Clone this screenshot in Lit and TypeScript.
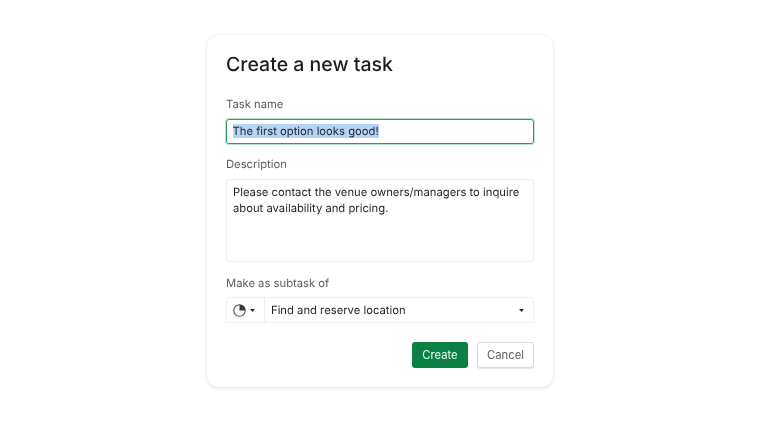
import { LitElement, html, css } from "lit";
import { customElement } from "lit/decorators.js";

@customElement("app-root")
export class AppRoot extends LitElement {
  static styles = css`
    :host {
      display: flex;
      justify-content: center;
      width: 760px;
      height: 424px;
      background: #fff;
      font-family: Inter, "Liberation Sans", sans-serif;
      color: #1f2328;
      box-sizing: border-box;
      padding-top: 35px;
      text-rendering: geometricPrecision;
    }
    .card {
      width: 346px;
      height: 352px;
      box-sizing: border-box;
      border-radius: 12px;
      background: #fff;
      box-shadow: 0 0 0 1px rgba(0, 0, 0, 0.02), 0 1px 4px rgba(0, 0, 0, 0.11);
      padding: 17px 19px 19px;
      display: flex;
      flex-direction: column;
      will-change: transform;
    }
    .card > * {
      flex: none;
    }
    h1 {
      margin: 0;
      font-size: 19.5px;
      line-height: 24px;
      font-weight: 500;
      color: #1a1e23;
    }
    label {
      display: block;
      font-size: 11.25px;
      line-height: 16px;
      color: #5a5f66;
    }
    .l1 { margin-top: 19.5px; }
    .l2 { margin-top: 12.5px; }
    .l3 { margin-top: 13.5px; }
    .input {
      margin-top: 7px;
      height: 25px;
      box-sizing: border-box;
      border: 1.5px solid #2f9a63;
      box-shadow: 0 0 0 1px #b9e2cb;
      border-radius: 3px;
      font-size: 11.25px;
      line-height: 15px;
      padding: 4px 5.5px;
      color: #1f2328;
      white-space: nowrap;
    }
    .sel {
      background: #b5d5f8;
    }
    .area {
      margin-top: 7px;
      height: 82.5px;
      box-sizing: border-box;
      border: 1px solid #eceef0;
      border-radius: 3px;
      padding: 3.5px 6px;
      font-size: 11.25px;
      line-height: 16.5px;
      color: #1f2328;
    }
    .select {
      margin-top: 6px;
      height: 26px;
      box-sizing: border-box;
      border: 1px solid #eff0f2;
      border-radius: 3px;
      display: flex;
      align-items: center;
      font-size: 11.25px;
      color: #1f2328;
    }
    .pre {
      width: 38px;
      height: 100%;
      box-sizing: border-box;
      border-right: 1px solid #eff0f2;
      display: flex;
      align-items: center;
      gap: 4px;
      padding-left: 6px;
    }
    .pie {
      width: 13px;
      height: 13px;
      display: block;
    }
    .caret {
      width: 5px;
      height: 3px;
      display: block;
    }
    .val {
      flex: 1;
      padding-left: 6px;
    }
    .select > .caret {
      margin-right: 9px;
    }
    .actions {
      margin-top: 19px;
      display: flex;
      justify-content: flex-end;
      gap: 9px;
    }
    button {
      font: inherit;
      font-size: 11.25px;
      height: 26px;
      box-sizing: border-box;
      border-radius: 3px;
      padding: 0;
    }
    .create {
      width: 56px;
      background: #0b8043;
      color: #f4faf7;
      border: none;
    }
    .cancel {
      width: 57px;
      background: #fff;
      color: #5a5f66;
      border: 1px solid #d8dadd;
      box-shadow: 0 1px 1px rgba(0, 0, 0, 0.1);
    }
  `;

  render() {
    const caret = html`<svg class="caret" viewBox="0 0 5 3"><path d="M0 0h5L2.5 3z" fill="#25282c"/></svg>`;
    return html`
      <div class="card">
        <h1>Create a new task</h1>
        <label class="l1">Task name</label>
        <div class="input"><span class="sel">The first option looks good!</span></div>
        <label class="l2">Description</label>
        <div class="area">Please contact the venue owners/managers to inquire about availability and pricing.</div>
        <label class="l3">Make as subtask of</label>
        <div class="select">
          <div class="pre">
            <svg class="pie" viewBox="0 0 13 13">
              <circle cx="6.5" cy="6.5" r="5.7" fill="#fff" stroke="#4a4e54" stroke-width="1.1"/>
              <path d="M6.5 6.5V.8a5.7 5.7 0 0 1 5.7 5.7z" fill="#33373c"/>
            </svg>
            ${caret}
          </div>
          <div class="val">Find and reserve location</div>
          ${caret}
        </div>
        <div class="actions">
          <button class="create">Create</button>
          <button class="cancel">Cancel</button>
        </div>
      </div>
    `;
  }
}
